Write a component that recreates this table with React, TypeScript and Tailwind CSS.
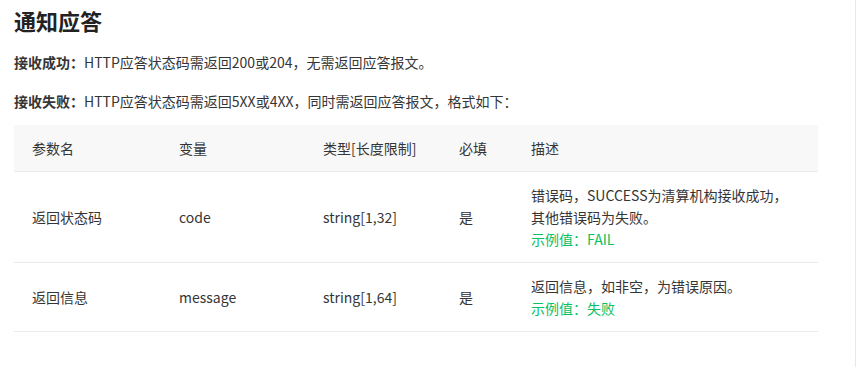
const rows = [
  {
    name: "返回状态码",
    key: "code",
    type: "string[1,32]",
    required: "是",
    desc: ["错误码，SUCCESS为清算机构接收成功，", "其他错误码为失败。"],
    example: "FAIL",
  },
  {
    name: "返回信息",
    key: "message",
    type: "string[1,64]",
    required: "是",
    desc: ["返回信息，如非空，为错误原因。"],
    example: "失败",
  },
];

export default function App() {
  return (
    <div
      className="w-[856px] h-[367px] bg-white border-r border-[#e8e8e8] pl-[14px] pt-[4px] text-[#353535] overflow-hidden"
      style={{ fontFamily: '"Noto Sans CJK SC", "Noto Sans", sans-serif' }}
    >
      <h2 className="text-[22px] leading-[32px] font-bold text-[#222]">通知应答</h2>
      <p className="mt-[14px] text-[14px] leading-[24px]">
        <span className="font-bold">接收成功：</span>HTTP应答状态码需返回200或204，无需返回应答报文。
      </p>
      <p className="mt-[15px] text-[14px] leading-[24px]">
        <span className="font-bold">接收失败：</span>HTTP应答状态码需返回5XX或4XX，同时需返回应答报文，格式如下：
      </p>

      <div className="mt-[12px] w-[804px] text-[14px]">
        <div className="flex bg-[#f8f8f8] border-b border-[#ebebeb] leading-[22px] py-[12px]">
          <div className="w-[147px] pl-[18px]">参数名</div>
          <div className="w-[144px] pl-[18px]">变量</div>
          <div className="w-[136px] pl-[18px]">类型[长度限制]</div>
          <div className="w-[72px] pl-[18px]">必填</div>
          <div className="flex-1 pl-[18px]">描述</div>
        </div>
        {rows.map((r) => (
          <div key={r.key} className="flex items-center border-b border-[#ebebeb] leading-[22px] py-[12px]">
            <div className="w-[147px] pl-[18px]">{r.name}</div>
            <div className="w-[144px] pl-[18px]">{r.key}</div>
            <div className="w-[136px] pl-[18px]">{r.type}</div>
            <div className="w-[72px] pl-[18px]">{r.required}</div>
            <div className="flex-1 pl-[18px]">
              {r.desc.map((d) => (
                <div key={d}>{d}</div>
              ))}
              <div className="text-[#07c160]">示例值：{r.example}</div>
            </div>
          </div>
        ))}
      </div>
    </div>
  );
}
